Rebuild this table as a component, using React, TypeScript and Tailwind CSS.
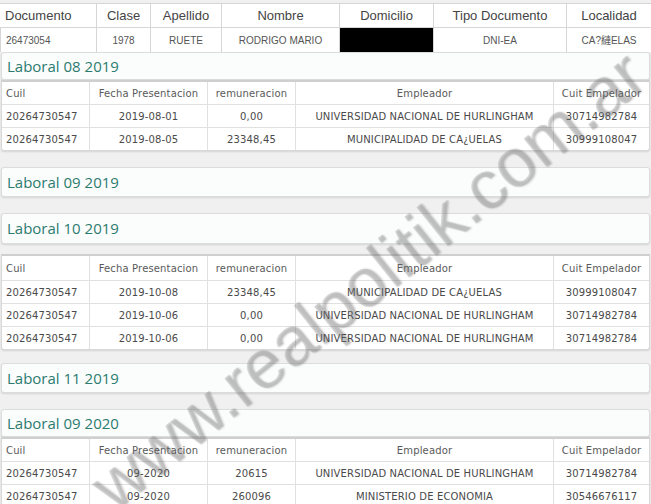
import React from "react";

const topHead = ["Documento", "Clase", "Apellido", "Nombre", "Domicilio", "Tipo Documento", "Localidad"];

type Row = [string, string, string, string, string];

const HEAD: Row = ["Cuil", "Fecha Presentacion", "remuneracion", "Empleador", "Cuit Empelador"];

function Title({ text, h }: { text: string; h: string }) {
  return (
    <div
      className={`${h} flex items-center rounded-[3px] border border-[#dcdcdc] bg-[#fbfdfd] pl-[5px] shadow-[0_1px_2px_rgba(0,0,0,0.12)]`}
    >
      <span className="text-[15px] text-[#2b7b6e] [font-family:'Open_Sans',sans-serif]">{text}</span>
    </div>
  );
}

function LTable({ rows, headH, rowH }: { rows: Row[]; headH: string; rowH: string }) {
  const all = [HEAD, ...rows];
  return (
    <div className="overflow-hidden rounded-b-[3px] border-x border-b border-t-2 border-[#d8d8d8] border-t-[#cfcfcf] bg-white shadow-[0_1px_2px_rgba(0,0,0,0.12)] [font-family:'DejaVu_Sans',Verdana,sans-serif] text-[10px] tracking-[0.15px] text-[#4a4a4a]">
      {all.map((r, i) => (
        <div
          key={i}
          className={`grid grid-cols-[87px_118px_88px_258px_1fr] ${i === 0 ? headH : rowH} ${
            i > 0 ? "border-t border-[#e0e0e0]" : ""
          }`}
        >
          {r.map((c, j) => (
            <div
              key={j}
              className={`flex items-center whitespace-nowrap ${j === 0 ? "justify-start pl-[4px]" : "justify-center"} ${
                j > 0 ? "border-l border-[#e0e0e0]" : ""
              } ${i === 0 ? "text-[#5a5a5a]" : ""}`}
            >
              {c}
            </div>
          ))}
        </div>
      ))}
    </div>
  );
}

export default function App() {
  return (
    <div className="relative h-[504px] w-[651px] overflow-hidden bg-[#f0f0f0]">
      <div className="pt-[3px]">
        {/* top table */}
        <div className="w-[651px] bg-white [font-family:'Liberation_Sans',Arial,sans-serif]">
          <div className="grid h-[25px] grid-cols-[96px_54px_71px_118px_94px_133px_1fr] border-y border-[#d6d6d6] text-[13px] text-[#444]">
            {topHead.map((h, i) => (
              <div
                key={h}
                className={`flex items-center ${i === 0 ? "justify-start pl-[5px]" : "justify-center"} ${
                  i > 0 ? "border-l border-[#d6d6d6]" : ""
                }`}
              >
                {h}
              </div>
            ))}
          </div>
          <div className="grid h-[24px] grid-cols-[96px_54px_71px_118px_94px_133px_1fr] text-[10px] text-[#555]">
            <div className="flex items-center pl-[5px] border-l border-[#d6d6d6]">26473054</div>
            <div className="flex items-center justify-center border-l border-[#d6d6d6]">1978</div>
            <div className="flex items-center justify-center border-l border-[#d6d6d6]">RUETE</div>
            <div className="flex items-center justify-center border-l border-[#d6d6d6]">RODRIGO MARIO</div>
            <div className="flex items-stretch border-l border-[#d6d6d6]">
              <div className="w-full bg-black" />
            </div>
            <div className="flex items-center justify-center border-l border-[#d6d6d6]">DNI-EA</div>
            <div className="flex items-center justify-center border-l border-[#d6d6d6] [font-family:'Liberation_Sans','Noto_Sans_CJK_SC',sans-serif]">
              CA?縺ELAS
            </div>
          </div>
        </div>

        <div className="px-[1px]">
          {/* 08 2019 */}
          <Title text="Laboral 08 2019" h="h-[28px]" />
          <LTable
            headH="h-[22px]"
            rowH="h-[23px]"
            rows={[
              ["20264730547", "2019-08-01", "0,00", "UNIVERSIDAD NACIONAL DE HURLINGHAM", "30714982784"],
              ["20264730547", "2019-08-05", "23348,45", "MUNICIPALIDAD DE CA¿UELAS", "30999108047"],
            ]}
          />

          <div className="mt-[16px]">
            <Title text="Laboral 09 2019" h="h-[30px]" />
          </div>

          <div className="mt-[16px]">
            <Title text="Laboral 10 2019" h="h-[31px]" />
          </div>
          <div className="mt-[10px]">
            <LTable
              headH="h-[24px]"
              rowH="h-[23px]"
              rows={[
                ["20264730547", "2019-10-08", "23348,45", "MUNICIPALIDAD DE CA¿UELAS", "30999108047"],
                ["20264730547", "2019-10-06", "0,00", "UNIVERSIDAD NACIONAL DE HURLINGHAM", "30714982784"],
                ["20264730547", "2019-10-06", "0,00", "UNIVERSIDAD NACIONAL DE HURLINGHAM", "30714982784"],
              ]}
            />
          </div>

          <div className="mt-[13px]">
            <Title text="Laboral 11 2019" h="h-[30px]" />
          </div>

          <div className="mt-[16px]">
            <Title text="Laboral 09 2020" h="h-[28px]" />
          </div>
          <LTable
            headH="h-[22px]"
            rowH="h-[23px]"
            rows={[
              ["20264730547", "09-2020", "20615", "UNIVERSIDAD NACIONAL DE HURLINGHAM", "30714982784"],
              ["20264730547", "09-2020", "260096", "MINISTERIO DE ECONOMIA", "30546676117"],
            ]}
          />
        </div>
      </div>

      {/* watermark */}
      <div className="pointer-events-none absolute left-[368px] top-[280px] -translate-x-1/2 -translate-y-1/2 -rotate-[38.7deg] whitespace-nowrap text-[69px] leading-none text-[rgba(150,150,150,0.3)] [font-family:'Liberation_Sans',Arial,sans-serif] [text-shadow:1px_1px_2px_rgba(0,0,0,0.18)]">
        www.realpolitik.com.ar
      </div>
    </div>
  );
}
